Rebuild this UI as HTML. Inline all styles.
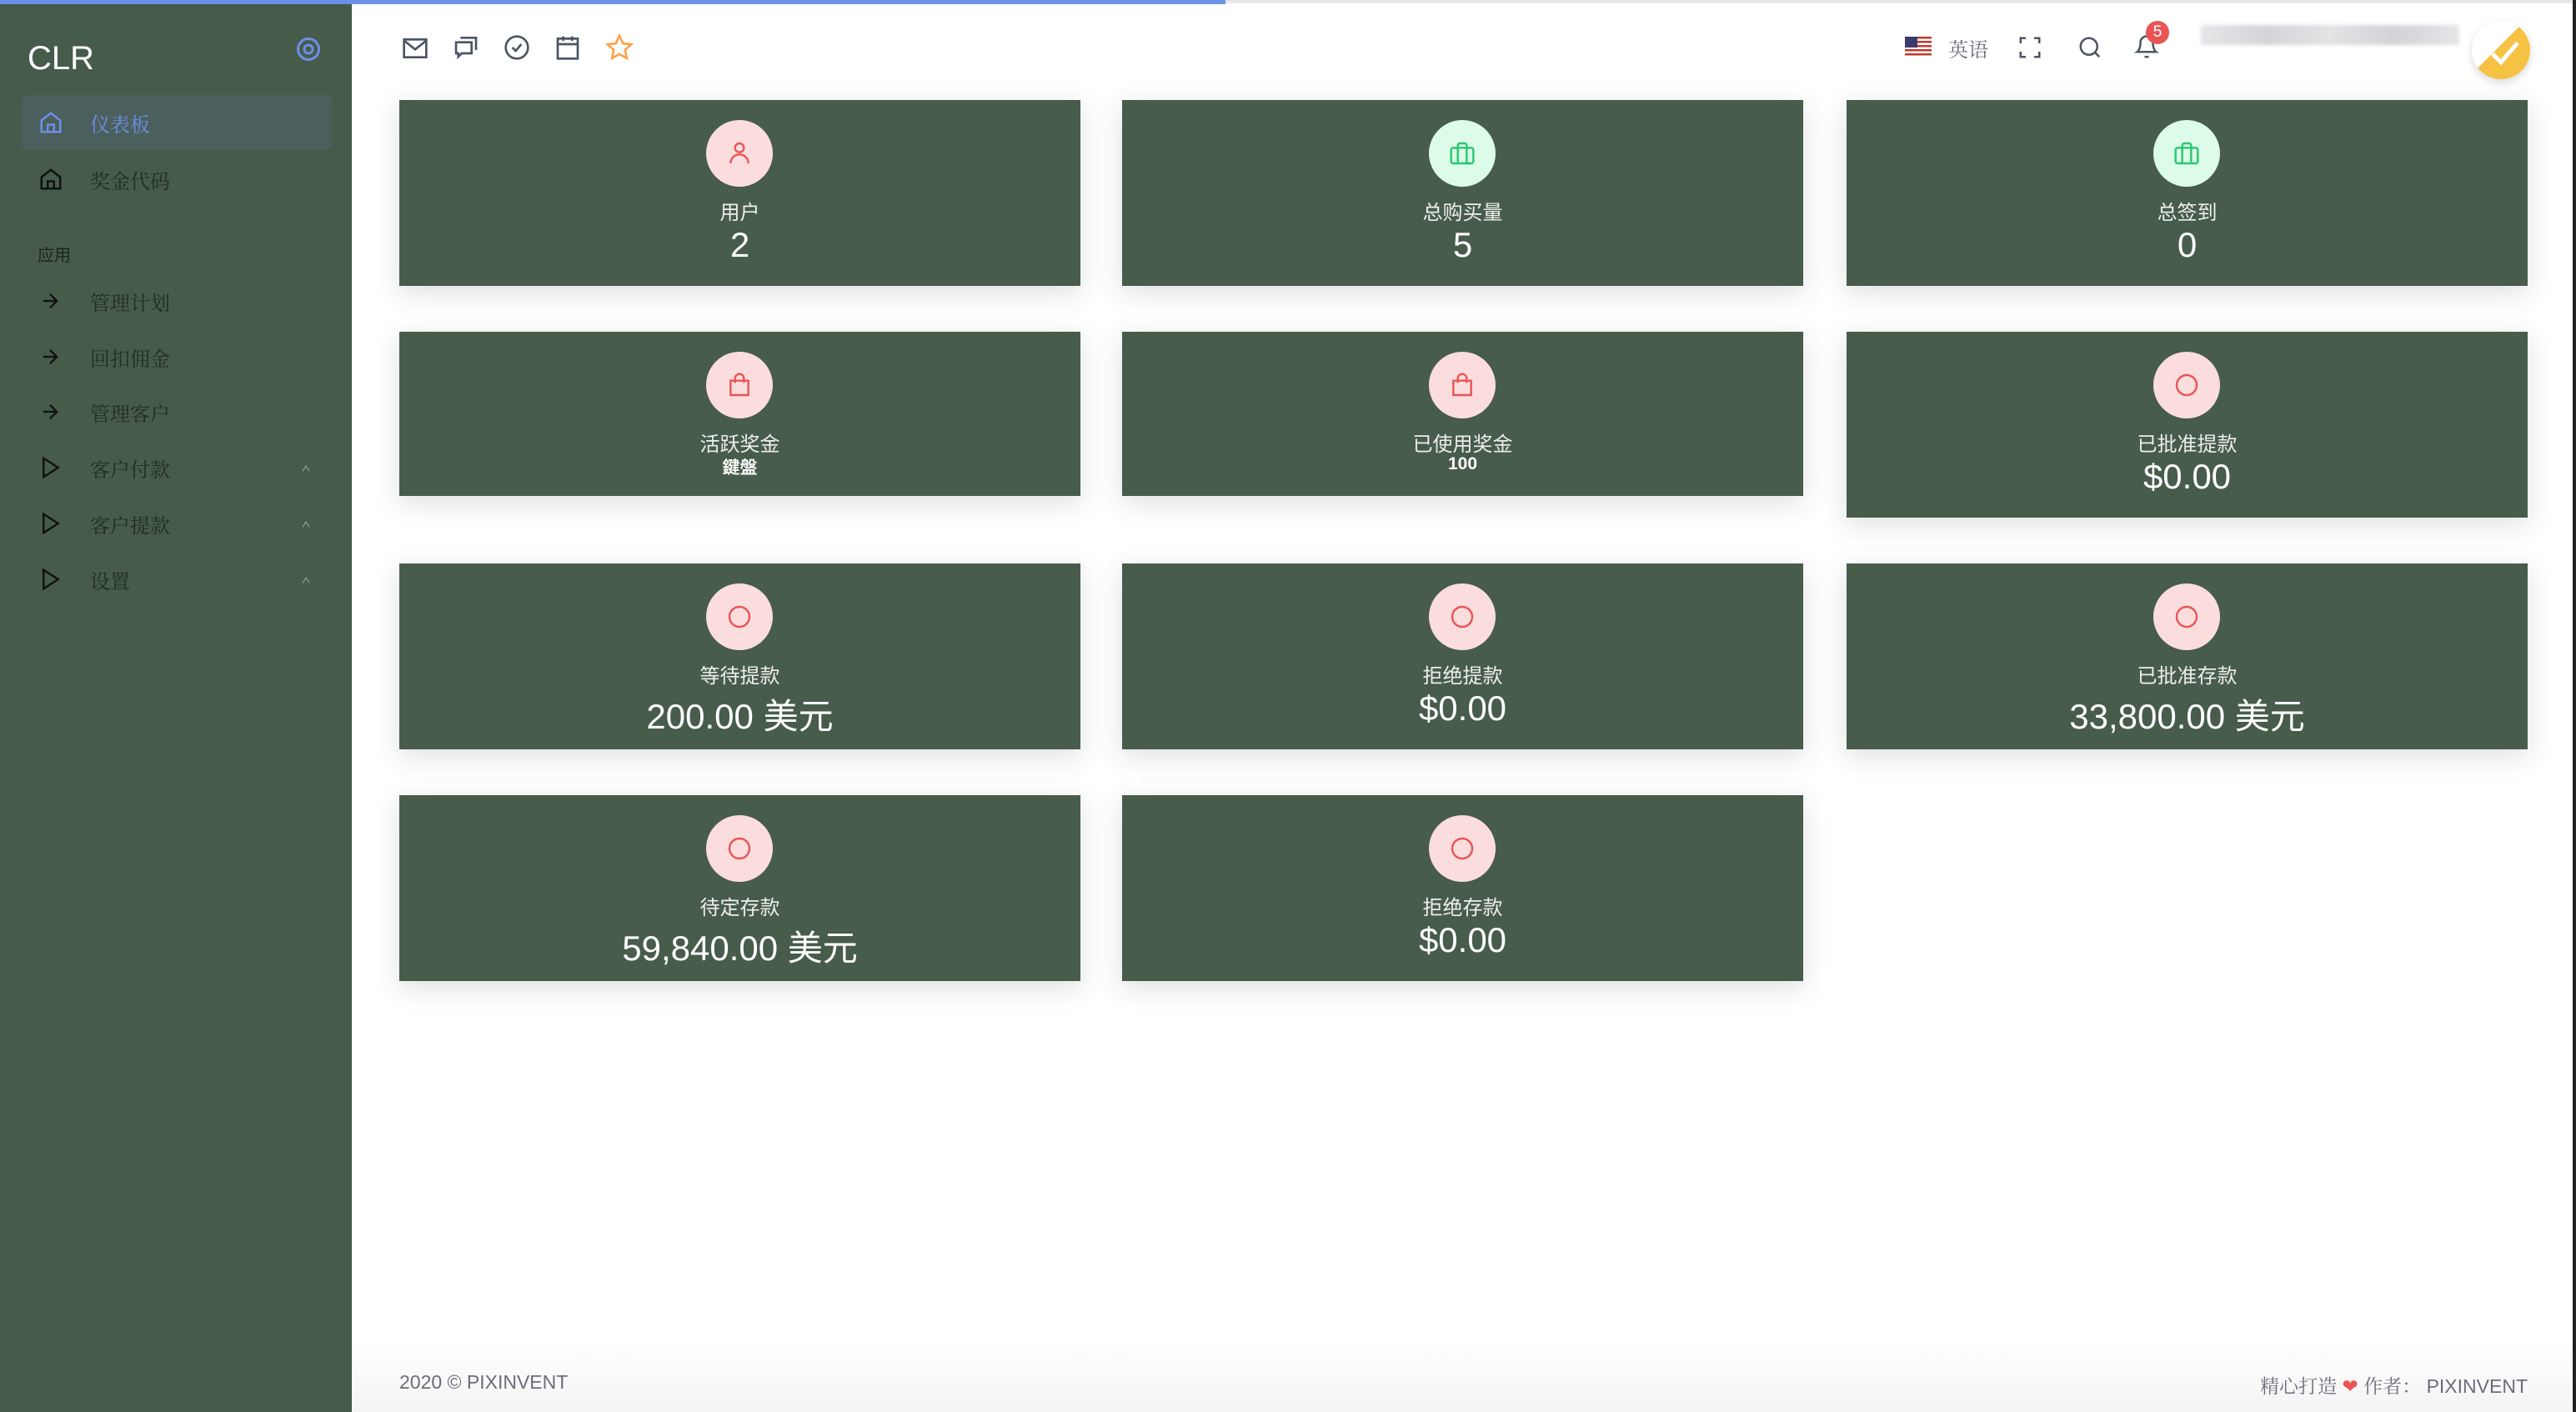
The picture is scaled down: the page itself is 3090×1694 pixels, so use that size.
<!DOCTYPE html>
<html><head><meta charset="utf-8"><style>
*{box-sizing:border-box;margin:0;padding:0}
body{width:3090px;height:1694px;background:#fff;position:relative;overflow:hidden;font-family:"Liberation Sans","Noto Sans CJK SC",sans-serif}
.sb{position:absolute;left:0;top:0;width:422px;height:1694px;background:#475b4b}
.bar{position:absolute;left:0;top:0;width:1470px;height:5px;background:#6d8fe6}
.bar2{position:absolute;left:1470px;top:0;width:1620px;height:4px;background:#e6e6e6}
.logo{position:absolute;left:33px;top:48px;color:#fff;font-size:40px;font-weight:500}
.mi{position:absolute;left:26px;width:372px;height:66px;display:flex;align-items:center;font-family:"Noto Serif CJK SC",serif;font-size:24px;color:#222c24}
.mi svg{position:absolute;left:20px}
.mi span{position:absolute;left:82px}
.act{background:#4b5f5d;border-radius:6px;color:#6d8fe6}
.chev{position:absolute;left:335px;color:#9aa;font-size:20px}
.sec{position:absolute;left:45px;top:290px;font-size:20px;color:#1c241e}
.card{position:absolute;width:817px;background:#475c4b;box-shadow:0 8px 30px rgba(34,41,47,.15);text-align:center;color:#fff}
.ic{position:absolute;left:368px;top:24px;width:80px;height:80px;border-radius:50%;background:#fbdddd;display:flex;align-items:center;justify-content:center}
.ic.g{background:#dcfbe8}
.lb{position:absolute;left:0;right:0;top:115px;font-size:24px;color:#eee}
.vl{position:absolute;left:0;right:0;top:150px;font-size:42px;font-weight:500}
.vl span{font-weight:normal}
.sm{position:absolute;left:0;right:0;top:147px;font-size:21px;font-weight:bold}
.foot{position:absolute;top:1645px;font-size:23px;color:#6e6b7b}
</style></head><body>
<div class="sb"></div>
<div class="bar"></div><div class="bar2"></div>
<div class="logo">CLR</div>
<svg style="position:absolute;left:355px;top:44px" width="30" height="30" viewBox="0 0 30 30"><circle cx="15" cy="15" r="12.5" fill="none" stroke="#6d8fe6" stroke-width="3"/><circle cx="15" cy="15" r="5" fill="none" stroke="#6d8fe6" stroke-width="3"/></svg>

<div class="mi act" style="top:114px"><svg width="30" height="30" viewBox="0 0 24 24" fill="none" stroke="#6d8fe6" stroke-width="2"><path d="M3 10l9-7 9 7v11H3z"/><path d="M9 21v-7h6v7"/></svg><span>仪表板</span></div>
<div class="mi" style="top:182px"><svg width="30" height="30" viewBox="0 0 24 24" fill="none" stroke="#111" stroke-width="2"><path d="M3 10l9-7 9 7v11H3z"/><path d="M9 21v-7h6v7"/></svg><span>奖金代码</span></div>
<div class="sec">应用</div>
<div class="mi" style="top:328px"><svg width="28" height="28" viewBox="0 0 24 24" fill="none" stroke="#111" stroke-width="2"><path d="M5 12h14M12 5l7 7-7 7"/></svg><span>管理计划</span></div>
<div class="mi" style="top:395px"><svg width="28" height="28" viewBox="0 0 24 24" fill="none" stroke="#111" stroke-width="2"><path d="M5 12h14M12 5l7 7-7 7"/></svg><span>回扣佣金</span></div>
<div class="mi" style="top:461px"><svg width="28" height="28" viewBox="0 0 24 24" fill="none" stroke="#111" stroke-width="2"><path d="M5 12h14M12 5l7 7-7 7"/></svg><span>管理客户</span></div>
<div class="mi" style="top:528px"><svg width="30" height="30" viewBox="0 0 24 24" fill="none" stroke="#111" stroke-width="2"><path d="M5 3l14 9-14 9z"/></svg><span>客户付款</span><b class="chev">^</b></div>
<div class="mi" style="top:595px"><svg width="30" height="30" viewBox="0 0 24 24" fill="none" stroke="#111" stroke-width="2"><path d="M5 3l14 9-14 9z"/></svg><span>客户提款</span><b class="chev">^</b></div>
<div class="mi" style="top:662px"><svg width="30" height="30" viewBox="0 0 24 24" fill="none" stroke="#111" stroke-width="2"><path d="M5 3l14 9-14 9z"/></svg><span>设置</span><b class="chev">^</b></div>

<svg style="position:absolute;left:482px;top:42px" width="32" height="32" viewBox="0 0 24 24" fill="none" stroke="#4b5563" stroke-width="2"><rect x="2" y="4" width="20" height="16"/><path d="M2 5l10 8 10-8"/></svg>
<svg style="position:absolute;left:543px;top:40px" width="32" height="32" viewBox="0 0 24 24" fill="none" stroke="#4b5563" stroke-width="2"><path d="M7 4h14v11"/><path d="M3 8h14v10H8l-3 3v-3H3z"/></svg>
<svg style="position:absolute;left:604px;top:41px" width="32" height="32" viewBox="0 0 24 24" fill="none" stroke="#4b5563" stroke-width="2"><circle cx="12" cy="12" r="10"/><path d="M8 12l3 3 5-6"/></svg>
<svg style="position:absolute;left:665px;top:40px" width="32" height="34" viewBox="0 0 24 24" fill="none" stroke="#4b5563" stroke-width="2"><rect x="3" y="4" width="18" height="18"/><path d="M3 9h18M8 2v4M16 2v4"/></svg>
<svg style="position:absolute;left:726px;top:40px" width="34" height="34" viewBox="0 0 24 24" fill="none" stroke="#ff9f43" stroke-width="1.8"><path d="M12 2l3 6.5 7 .8-5.2 4.8 1.4 7L12 17.6 5.8 21l1.4-7L2 9.3l7-.8z"/></svg>

<svg style="position:absolute;left:2285px;top:44px" width="32" height="24" viewBox="0 0 32 24"><rect width="32" height="24" fill="#fff"/><g fill="#c0392b"><rect y="0" width="32" height="2.5"/><rect y="5" width="32" height="2.5"/><rect y="10" width="32" height="2.5"/><rect y="15" width="32" height="2.5"/><rect y="20" width="32" height="2.5"/></g><rect width="15" height="13" fill="#3c3b6e"/></svg>
<div style="position:absolute;left:2337px;top:40px;font-size:24px;color:#6e6b7b;font-family:'Noto Serif CJK SC',serif">英语</div>
<svg style="position:absolute;left:2420px;top:42px" width="30" height="30" viewBox="0 0 24 24" fill="none" stroke="#4b5563" stroke-width="2"><path d="M3 8V3h5M16 3h5v5M21 16v5h-5M8 21H3v-5"/></svg>
<svg style="position:absolute;left:2492px;top:42px" width="30" height="30" viewBox="0 0 24 24" fill="none" stroke="#4b5563" stroke-width="2"><circle cx="11" cy="11" r="8"/><path d="M21 21l-4.3-4.3"/></svg>
<svg style="position:absolute;left:2560px;top:40px" width="30" height="32" viewBox="0 0 24 24" fill="none" stroke="#4b5563" stroke-width="2"><path d="M18 8a6 6 0 0 0-12 0c0 7-3 9-3 9h18s-3-2-3-9M13.7 21a2 2 0 0 1-3.4 0"/></svg>
<div style="position:absolute;left:2574px;top:25px;width:28px;height:28px;border-radius:50%;background:#ea5455;color:#fff;font-size:19px;text-align:center;line-height:28px">5</div>
<div style="position:absolute;left:2640px;top:30px;width:310px;height:24px;background:linear-gradient(90deg,#e6e6e9,#d4d5d9,#e3e3e6,#d2d3d7,#e6e6e9);filter:blur(2px)"></div>
<div style="position:absolute;left:2965px;top:25px;width:70px;height:70px;border-radius:50%;background:linear-gradient(135deg,#fff 45%,#f6c244 46%);box-shadow:0 4px 10px rgba(0,0,0,.15)"></div>
<svg style="position:absolute;left:2985px;top:45px" width="40" height="36" viewBox="0 0 24 20" fill="none" stroke="#fff" stroke-width="3"><path d="M3 11l6 6L21 3"/></svg>

<div class="card" style="left:479px;top:120px;height:223px"><div class="ic"><svg width="32" height="32" viewBox="0 0 24 24" fill="none" stroke="#ea5455" stroke-width="1.8"><circle cx="12" cy="7" r="4"/><path d="M4 21a8 8 0 0 1 16 0"/></svg></div><div class="lb">用户</div><div class="vl">2</div></div>
<div class="card" style="left:1346px;top:120px;height:223px"><div class="ic g"><svg width="32" height="32" viewBox="0 0 24 24" fill="none" stroke="#28c76f" stroke-width="1.8"><rect x="2" y="7" width="20" height="14" rx="2"/><path d="M16 21V5a2 2 0 0 0-2-2h-4a2 2 0 0 0-2 2v16"/></svg></div><div class="lb">总购买量</div><div class="vl">5</div></div>
<div class="card" style="left:2215px;top:120px;height:223px"><div class="ic g"><svg width="32" height="32" viewBox="0 0 24 24" fill="none" stroke="#28c76f" stroke-width="1.8"><rect x="2" y="7" width="20" height="14" rx="2"/><path d="M16 21V5a2 2 0 0 0-2-2h-4a2 2 0 0 0-2 2v16"/></svg></div><div class="lb">总签到</div><div class="vl">0</div></div>

<div class="card" style="left:479px;top:398px;height:197px"><div class="ic"><svg width="32" height="32" viewBox="0 0 24 24" fill="none" stroke="#ea5455" stroke-width="1.8"><path d="M4 8h16v13H4z"/><path d="M8 10V6a4 4 0 0 1 8 0v4"/></svg></div><div class="lb">活跃奖金</div><div class="sm">鍵盤</div></div>
<div class="card" style="left:1346px;top:398px;height:197px"><div class="ic"><svg width="32" height="32" viewBox="0 0 24 24" fill="none" stroke="#ea5455" stroke-width="1.8"><path d="M4 8h16v13H4z"/><path d="M8 10V6a4 4 0 0 1 8 0v4"/></svg></div><div class="lb">已使用奖金</div><div class="sm">100</div></div>
<div class="card" style="left:2215px;top:398px;height:223px"><div class="ic"><svg width="32" height="32" viewBox="0 0 24 24" fill="none" stroke="#ea5455" stroke-width="1.8"><circle cx="12" cy="12" r="9"/></svg></div><div class="lb">已批准提款</div><div class="vl">$0.00</div></div>

<div class="card" style="left:479px;top:676px;height:223px"><div class="ic"><svg width="32" height="32" viewBox="0 0 24 24" fill="none" stroke="#ea5455" stroke-width="1.8"><circle cx="12" cy="12" r="9"/></svg></div><div class="lb">等待提款</div><div class="vl">200.00 <span>美元</span></div></div>
<div class="card" style="left:1346px;top:676px;height:223px"><div class="ic"><svg width="32" height="32" viewBox="0 0 24 24" fill="none" stroke="#ea5455" stroke-width="1.8"><circle cx="12" cy="12" r="9"/></svg></div><div class="lb">拒绝提款</div><div class="vl">$0.00</div></div>
<div class="card" style="left:2215px;top:676px;height:223px"><div class="ic"><svg width="32" height="32" viewBox="0 0 24 24" fill="none" stroke="#ea5455" stroke-width="1.8"><circle cx="12" cy="12" r="9"/></svg></div><div class="lb">已批准存款</div><div class="vl">33,800.00 <span>美元</span></div></div>

<div class="card" style="left:479px;top:954px;height:223px"><div class="ic"><svg width="32" height="32" viewBox="0 0 24 24" fill="none" stroke="#ea5455" stroke-width="1.8"><circle cx="12" cy="12" r="9"/></svg></div><div class="lb">待定存款</div><div class="vl">59,840.00 <span>美元</span></div></div>
<div class="card" style="left:1346px;top:954px;height:223px"><div class="ic"><svg width="32" height="32" viewBox="0 0 24 24" fill="none" stroke="#ea5455" stroke-width="1.8"><circle cx="12" cy="12" r="9"/></svg></div><div class="lb">拒绝存款</div><div class="vl">$0.00</div></div>

<div style="position:absolute;left:422px;top:1610px;width:2668px;height:84px;background:linear-gradient(#fff,#f4f4f5)"></div>
<div class="foot" style="left:479px">2020 © PIXINVENT</div>
<div class="foot" style="right:58px;font-family:'Liberation Sans','Noto Serif CJK SC',sans-serif">精心打造 <span style="color:#ea5455">❤</span> 作者：&nbsp;PIXINVENT</div>
<div style="position:absolute;left:3086px;top:0;width:4px;height:1694px;background:#222"></div>
</body></html>
